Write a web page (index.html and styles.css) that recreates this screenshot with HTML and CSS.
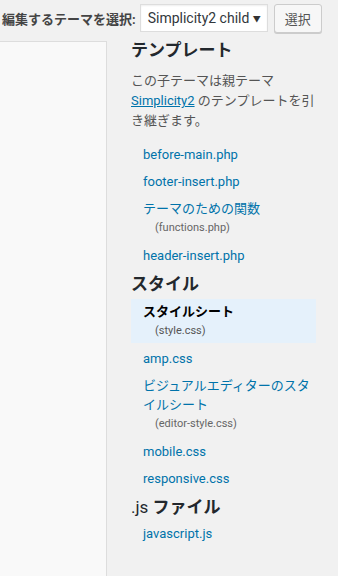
FILE: index.html
```html
<!DOCTYPE html>
<html lang="ja">
<head>
    <meta charset="UTF-8">
    <meta name="viewport" content="width=device-width, initial-scale=1.0">
    <title>テーマの編集</title>
    <link rel="stylesheet" href="styles.css">
</head>
<body>
    <div class="theme-select">
        <label for="theme">編集するテーマを選択:</label>
        <div class="select-box">
            <span class="select-value">Simplicity2 child</span>
            <span class="select-arrow">▼</span>
        </div>
        <button type="button" class="btn">選択</button>
    </div>

    <div class="editor">
        <div class="code-area"></div>

        <div class="templateside">
            <h3>テンプレート</h3>
            <p class="desc">この子テーマは親テーマ <a href="#">Simplicity2</a> のテンプレートを引き継ぎます。</p>
            <ul>
                <li><a href="#">before-main.php</a></li>
                <li><a href="#">footer-insert.php</a></li>
                <li><a href="#">テーマのための関数<span class="file">(functions.php)</span></a></li>
                <li><a href="#">header-insert.php</a></li>
            </ul>

            <h3>スタイル</h3>
            <ul>
                <li class="current"><a href="#">スタイルシート<span class="file">(style.css)</span></a></li>
                <li><a href="#">amp.css</a></li>
                <li><a href="#">ビジュアルエディターのスタイルシート<span class="file">(editor-style.css)</span></a></li>
                <li><a href="#">mobile.css</a></li>
                <li><a href="#">responsive.css</a></li>
            </ul>

            <h3><span class="ext">.js</span> ファイル</h3>
            <ul>
                <li><a href="#">javascript.js</a></li>
            </ul>
        </div>
    </div>
</body>
</html>
```

FILE: styles.css
```css
body {
    font-family: Roboto, "Noto Sans CJK JP", sans-serif;
    font-size: 13px;
    margin: 0;
    padding: 0;
    background-color: #f1f1f1;
    color: #444;
    height: 576px;
    overflow: hidden;
}

.theme-select {
    display: flex;
    align-items: center;
    height: 36px;
    padding-left: 2px;
}

.theme-select label {
    font-weight: bold;
    color: #444;
    margin-right: 4px;
}

.select-box {
    display: flex;
    align-items: center;
    justify-content: space-between;
    width: 113px;
    height: 26px;
    padding: 0 6px 0 7px;
    background: #fff;
    border: 1px solid #ddd;
    box-shadow: inset 0 1px 2px rgba(0, 0, 0, 0.07);
    font-size: 14px;
    color: #32373c;
}

.select-arrow {
    font-size: 8px;
    color: #333;
}

.btn {
    margin-left: 6px;
    width: 48px;
    height: 29px;
    background: #f7f7f7;
    border: 1px solid #ccc;
    border-radius: 3px;
    box-shadow: 0 1px 0 #ccc;
    font-family: "Noto Sans CJK JP", sans-serif;
    font-size: 13px;
    color: #555;
    padding: 0;
}

.editor {
    display: flex;
    align-items: flex-start;
}

.code-area {
    width: 106px;
    height: 560px;
    margin-top: 5px;
    background: #f9f9f9;
    border-top: 1px solid #ddd;
    border-right: 1px solid #ddd;
    flex-shrink: 0;
}

.templateside {
    margin-left: 24px;
    width: 188px;
    margin-top: 3px;
}

.templateside h3 {
    margin: 0;
    font-size: 17px;
    line-height: 22px;
    font-weight: bold;
    color: #23282d;
}

.templateside h3 .ext {
    font-weight: normal;
}

.desc {
    margin: 10px 0 12px;
    line-height: 20px;
    color: #555;
}

.desc a {
    color: #0073aa;
}

.templateside ul {
    list-style: none;
    margin: 4px 0 6px;
    padding: 0;
    display: flex;
    flex-direction: column;
    gap: 4px;
}

.templateside li a {
    display: block;
    padding: 2px 0 2px 12px;
    line-height: 19px;
    color: #0073aa;
    text-decoration: none;
}

.templateside .file {
    display: block;
    padding-left: 12px;
    font-size: 11px;
    line-height: 20px;
    color: #666;
}

.templateside li.current a {
    background: #e5f1fb;
    color: #000;
    font-weight: 600;
    padding-top: 3px;
    padding-bottom: 2px;
    margin-right: 3px;
}

.templateside li.current .file {
    font-weight: normal;
    color: #555;
}
```
